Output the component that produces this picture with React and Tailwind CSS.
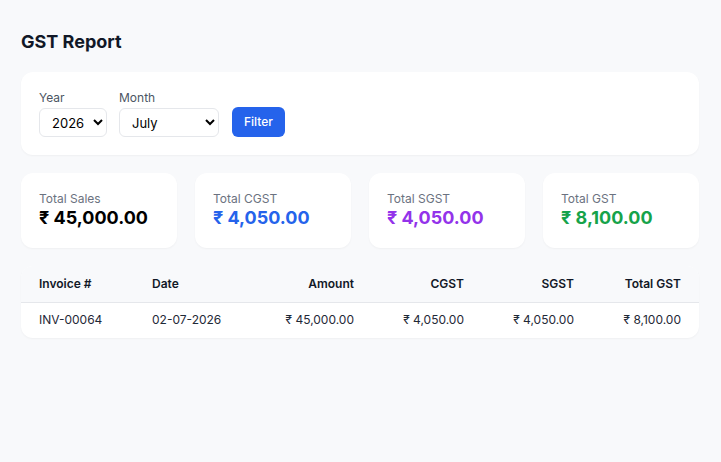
import { useState } from 'react'

const stats = [
  { label: 'Total Sales', value: '₹ 45,000.00', color: 'text-black' },
  { label: 'Total CGST', value: '₹ 4,050.00', color: 'text-[#2563eb]' },
  { label: 'Total SGST', value: '₹ 4,050.00', color: 'text-[#9333ea]' },
  { label: 'Total GST', value: '₹ 8,100.00', color: 'text-[#16a34a]' },
]

const rows = [
  {
    invoice: 'INV-00064',
    date: '02-07-2026',
    amount: '₹ 45,000.00',
    cgst: '₹ 4,050.00',
    sgst: '₹ 4,050.00',
    total: '₹ 8,100.00',
  },
]

const months = [
  'January', 'February', 'March', 'April', 'May', 'June',
  'July', 'August', 'September', 'October', 'November', 'December',
]

export default function App() {
  const [year, setYear] = useState('2026')
  const [month, setMonth] = useState('July')

  return (
    <div className="min-h-[462px] bg-[#f8f9fb] pr-[22px] pl-[21px] pt-[28px] font-['Inter',sans-serif] text-[#111827]">
      <h1 className="mb-4 text-lg leading-7 font-bold">GST Report</h1>

      <section className="rounded-xl bg-white p-[18px] shadow-[0_1px_2px_rgba(0,0,0,0.04)]">
        <div className="flex items-end gap-3">
          <label className="flex flex-col gap-[2px] text-xs leading-4 text-[#4b5563]">
            Year
            <select
              value={year}
              onChange={(e) => setYear(e.target.value)}
              className="h-[29px] w-[68px] rounded-md border border-[#e5e7eb] bg-white pl-2 text-[13px] text-black"
            >
              <option>2025</option>
              <option>2026</option>
            </select>
          </label>
          <label className="flex flex-col gap-[2px] text-xs leading-4 text-[#4b5563]">
            Month
            <select
              value={month}
              onChange={(e) => setMonth(e.target.value)}
              className="h-[29px] w-[100px] rounded-md border border-[#e5e7eb] bg-white pl-2 text-[13px] text-black"
            >
              {months.map((m) => (
                <option key={m}>{m}</option>
              ))}
            </select>
          </label>
          <button className="ml-px h-[30px] rounded-md bg-[#2563eb] px-3 text-xs font-medium text-white">
            Filter
          </button>
        </div>
      </section>

      <div className="mt-[18px] grid grid-cols-4 gap-[18px]">
        {stats.map((s) => (
          <div
            key={s.label}
            className="rounded-xl bg-white px-[18px] pt-[18px] pb-[19px] shadow-[0_1px_2px_rgba(0,0,0,0.04)]"
          >
            <div className="text-xs leading-4 text-[#6b7280]">{s.label}</div>
            <div className={`text-lg leading-[22px] font-bold ${s.color}`}>{s.value}</div>
          </div>
        ))}
      </div>

      <div className="mt-[18px] overflow-hidden rounded-xl bg-white shadow-[0_1px_2px_rgba(0,0,0,0.04)]">
        <table className="w-full table-fixed text-xs">
          <colgroup>
            <col className="w-[113px]" />
            <col className="w-[118px]" />
            <col className="w-[120px]" />
            <col className="w-[110px]" />
            <col className="w-[110px]" />
            <col className="w-[107px]" />
          </colgroup>
          <thead className="bg-[#f8f9fb]">
            <tr className="border-b border-[#e5e7eb]">
              <th className="h-[36px] pl-[18px] text-left font-semibold">Invoice #</th>
              <th className="pl-[18px] text-left font-semibold">Date</th>
              <th className="pr-[18px] text-right font-semibold">Amount</th>
              <th className="pr-[18px] text-right font-semibold">CGST</th>
              <th className="pr-[18px] text-right font-semibold">SGST</th>
              <th className="pr-[18px] text-right font-semibold">Total GST</th>
            </tr>
          </thead>
          <tbody className="text-[#1f2937]">
            {rows.map((r) => (
              <tr key={r.invoice}>
                <td className="h-[36px] pl-[18px]">{r.invoice}</td>
                <td className="pl-[18px]">{r.date}</td>
                <td className="pr-[18px] text-right">{r.amount}</td>
                <td className="pr-[18px] text-right">{r.cgst}</td>
                <td className="pr-[18px] text-right">{r.sgst}</td>
                <td className="pr-[18px] text-right">{r.total}</td>
              </tr>
            ))}
          </tbody>
        </table>
      </div>
    </div>
  )
}
